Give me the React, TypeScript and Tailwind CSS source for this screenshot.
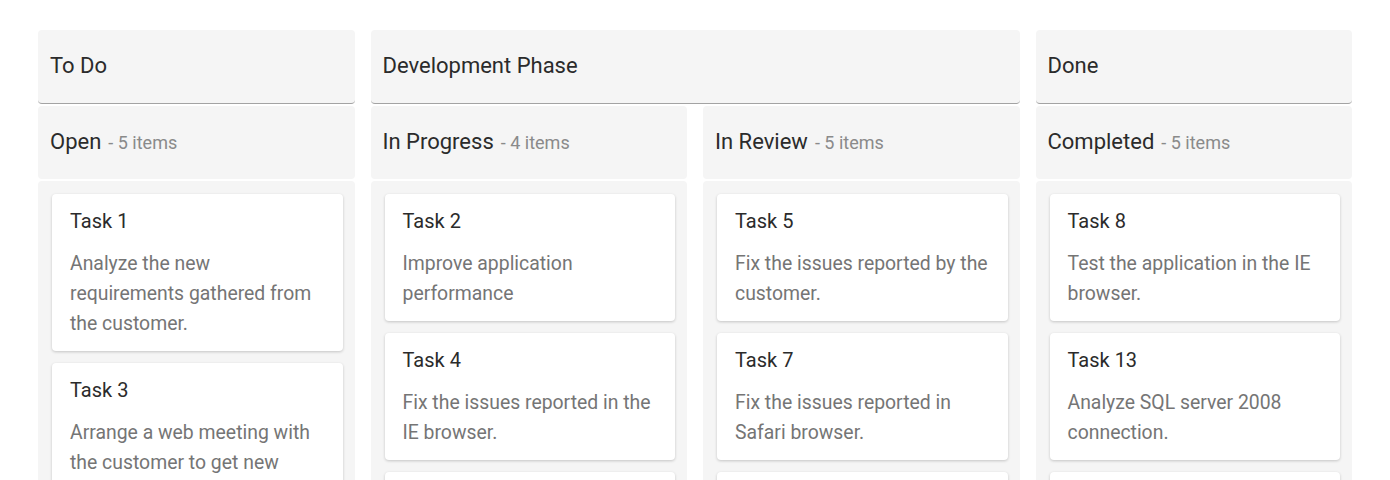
import React from 'react';

type Card = { id: string; summary: string };

const columns: { title: string; cards: Card[] }[] = [
  {
    title: 'Open',
    cards: [
      { id: 'Task 1', summary: 'Analyze the new requirements gathered from the customer.' },
      { id: 'Task 3', summary: 'Arrange a web meeting with the customer to get new requirements.' },
      { id: 'Task 9', summary: 'Analyze the customer requirements.' },
      { id: 'Task 11', summary: 'Validate new requirements.' },
      { id: 'Task 15', summary: 'Show the retrieved data from the server in grid control.' },
    ],
  },
  {
    title: 'In Progress',
    cards: [
      { id: 'Task 2', summary: 'Improve application performance' },
      { id: 'Task 4', summary: 'Fix the issues reported in the IE browser.' },
      { id: 'Task 6', summary: 'Fix the issues reported in the customer.' },
      { id: 'Task 10', summary: 'Arrange a web meeting with the customer.' },
    ],
  },
  {
    title: 'In Review',
    cards: [
      { id: 'Task 5', summary: 'Fix the issues reported by the customer.' },
      { id: 'Task 7', summary: 'Fix the issues reported in Safari browser.' },
      { id: 'Task 12', summary: 'Enhance editing functionality.' },
      { id: 'Task 14', summary: 'Improve the performance of the editing functionality.' },
      { id: 'Task 16', summary: 'Check the login page validation.' },
    ],
  },
  {
    title: 'Completed',
    cards: [
      { id: 'Task 8', summary: 'Test the application in the IE browser.' },
      { id: 'Task 13', summary: 'Analyze SQL server 2008 connection.' },
      { id: 'Task 17', summary: 'Fix cannot open user’s default database SQL error.' },
      { id: 'Task 18', summary: 'Validate the issues reported by the customer.' },
      { id: 'Task 19', summary: 'Check the ‘Forgot Password’ page.' },
    ],
  },
];

const counts = [5, 4, 5, 5];

const App = () => {
  return (
    <div className="bg-white px-[38px] pt-[30px] font-['Roboto',sans-serif] text-[#2b2b2b]">
      <div className="grid grid-cols-4 gap-x-4">
        {/* stacked headers */}
        <div className="h-[74px] rounded-[4px] border-b border-[#a3a3a3] bg-[#f5f5f5] px-3 pt-[21px] text-[22px] leading-[30px]">
          To Do
        </div>
        <div className="col-span-2 h-[74px] rounded-[4px] border-b border-[#a3a3a3] bg-[#f5f5f5] px-3 pt-[21px] text-[22px] leading-[30px]">
          Development Phase
        </div>
        <div className="h-[74px] rounded-[4px] border-b border-[#a3a3a3] bg-[#f5f5f5] px-3 pt-[21px] text-[22px] leading-[30px]">
          Done
        </div>

        {/* column headers */}
        {columns.map((col, i) => (
          <div
            key={col.title}
            className="mt-[2px] h-[73px] rounded-[4px] bg-[#f5f5f5] px-3 pt-[21px] text-[22px] leading-[30px]"
          >
            {col.title}
            <span className="ml-[7px] text-[18px] text-[#8a8a8a]">- {counts[i]} items</span>
          </div>
        ))}

        {/* cards */}
        {columns.map((col) => (
          <div
            key={col.title + '-content'}
            className="mt-[2px] flex flex-col gap-3 rounded-[4px] bg-[#f5f5f5] pb-3 pl-[14px] pr-[12px] pt-[13px]"
          >
            {col.cards.map((card) => (
              <div
                key={card.id}
                className="rounded-[4px] bg-white pb-[12px] pl-[18px] pr-[16px] pt-[13px] shadow-[0_1px_3px_rgba(0,0,0,0.2)]"
              >
                <div className="text-[20px] leading-[28px] text-[#2b2b2b]">{card.id}</div>
                <div className="mt-[14px] text-[19.4px] leading-[30px] text-[#757575]">{card.summary}</div>
              </div>
            ))}
          </div>
        ))}
      </div>
    </div>
  );
};

export default App;
